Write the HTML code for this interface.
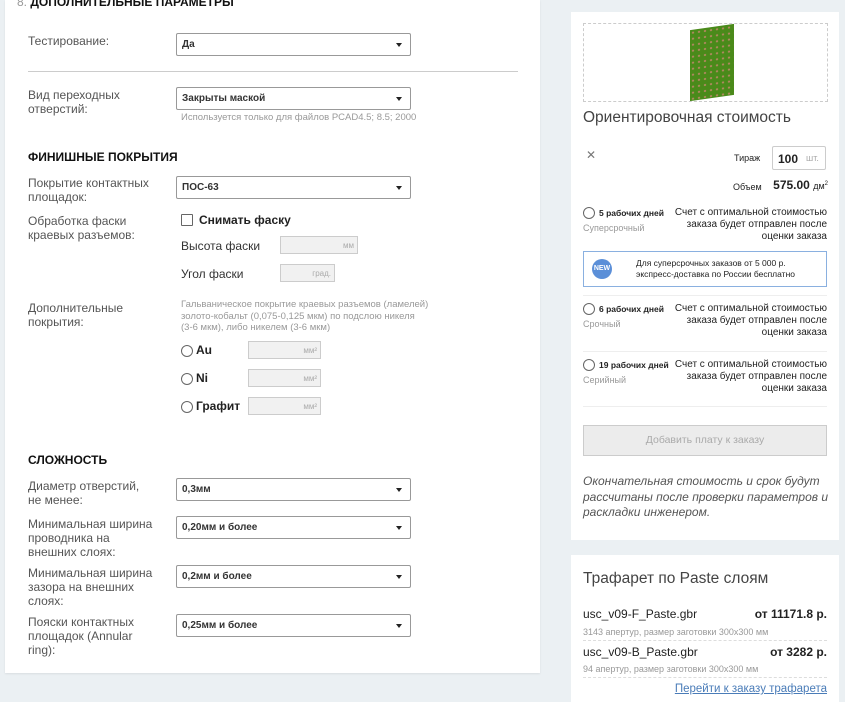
<!DOCTYPE html>
<html><head><meta charset="utf-8"><style>
html,body{margin:0;width:845px;height:702px;overflow:hidden}
body{background:#ebf0f3;font-family:"Liberation Sans",Arial,sans-serif;position:relative;color:#222}
.a{position:absolute}
.lp{left:5px;top:0;width:535px;height:673px;background:#fff;box-shadow:0 1px 2px rgba(0,0,0,.08)}
.lbl{position:absolute;left:28px;font-size:12px;color:#555;line-height:14px}
.sel{position:absolute;left:176px;height:21px;border:1px solid #999;border-radius:2px;font-size:10px;font-weight:bold;color:#333;line-height:21px;padding-left:5px;box-sizing:content-box;width:228px}
.sel:after{content:"";position:absolute;right:8px;top:9px;border-left:3.5px solid transparent;border-right:3.5px solid transparent;border-top:4px solid #222}
.h{position:absolute;left:28px;font-size:12px;font-weight:bold;color:#111}
.hint{position:absolute;left:181px;font-size:9.5px;color:#999;line-height:11.5px}
.inp{position:absolute;background:#f1f1f1;border:1px solid #ccc;font-size:8px;color:#aaa;text-align:right;padding-right:3px;box-sizing:border-box;height:18px;line-height:17px}
.rad{position:absolute;width:10px;height:10px;border:1px solid #666;border-radius:50%}
.rp{left:571px;top:12px;width:268px;height:528px;background:#fff}
.rp2{left:571px;top:555px;width:268px;height:147px;background:#fff}
.sm{font-size:9px}
.desc{position:absolute;right:18px;text-align:right;font-size:10px;line-height:12px;color:#222;white-space:nowrap}
.sep{position:absolute;left:583px;width:244px;height:1px;background:#eee}
.r{position:absolute;right:18px;text-align:right}
</style></head><body>
<div class="a lp"></div>
<div class="a" style="left:17px;top:-5px;font-size:12px;font-weight:bold;color:#111"><span style="color:#999;font-weight:normal">8.</span> ДОПОЛНИТЕЛЬНЫЕ ПАРАМЕТРЫ</div>
<div class="lbl" style="top:34px">Тестирование:</div>
<div class="sel" style="top:33px">Да</div>
<div class="a" style="left:28px;top:71px;width:490px;height:1px;background:#ccc"></div>
<div class="lbl" style="top:88px">Вид переходных<br>отверстий:</div>
<div class="sel" style="top:87px">Закрыты маской</div>
<div class="hint" style="top:112px">Используется только для файлов PCAD4.5; 8.5; 2000</div>
<div class="h" style="top:150px">ФИНИШНЫЕ ПОКРЫТИЯ</div>
<div class="lbl" style="top:176px">Покрытие контактных<br>площадок:</div>
<div class="sel" style="top:176px">ПОС-63</div>
<div class="lbl" style="top:214px">Обработка фаски<br>краевых разъемов:</div>
<div class="a" style="left:181px;top:214px;width:10px;height:10px;border:1px solid #666;border-radius:1px"></div>
<div class="a" style="left:199px;top:213px;font-size:12px;font-weight:bold">Снимать фаску</div>
<div class="a" style="left:181px;top:239px;font-size:12px;color:#333">Высота фаски</div>
<div class="inp" style="left:280px;top:236px;width:78px">мм</div>
<div class="a" style="left:181px;top:267px;font-size:12px;color:#333">Угол фаски</div>
<div class="inp" style="left:280px;top:264px;width:55px">град.</div>
<div class="lbl" style="top:301px">Дополнительные<br>покрытия:</div>
<div class="hint" style="top:299px">Гальваническое покрытие краевых разъемов (ламелей)<br>золото-кобальт (0,075-0,125 мкм) по подслою никеля<br>(3-6 мкм), либо никелем (3-6 мкм)</div>
<div class="rad" style="left:181px;top:345px"></div><div class="a" style="left:196px;top:343px;font-size:12px;font-weight:bold">Au</div><div class="inp" style="left:248px;top:341px;width:73px">мм²</div>
<div class="rad" style="left:181px;top:373px"></div><div class="a" style="left:196px;top:371px;font-size:12px;font-weight:bold">Ni</div><div class="inp" style="left:248px;top:369px;width:73px">мм²</div>
<div class="rad" style="left:181px;top:401px"></div><div class="a" style="left:196px;top:399px;font-size:12px;font-weight:bold">Графит</div><div class="inp" style="left:248px;top:397px;width:73px">мм²</div>
<div class="h" style="top:453px">СЛОЖНОСТЬ</div>
<div class="lbl" style="top:479px">Диаметр отверстий,<br>не менее:</div>
<div class="sel" style="top:478px">0,3мм</div>
<div class="lbl" style="top:517px">Минимальная ширина<br>проводника на<br>внешних слоях:</div>
<div class="sel" style="top:516px">0,20мм и более</div>
<div class="lbl" style="top:566px">Минимальная ширина<br>зазора на внешних<br>слоях:</div>
<div class="sel" style="top:565px">0,2мм и более</div>
<div class="lbl" style="top:615px">Пояски контактных<br>площадок (Annular<br>ring):</div>
<div class="sel" style="top:614px">0,25мм и более</div>

<div class="a rp"></div>
<div class="a" style="left:583px;top:23px;width:243px;height:77px;border:1px dashed #ccc"></div>
<div class="a" style="left:690px;top:27px;width:44px;height:71px;background:#4a8a1a;transform:skewY(-8deg);background-image:radial-gradient(#b86 0.8px,transparent 1.3px);background-size:6px 6px"></div>
<div class="a" style="left:583px;top:109px;font-size:15.5px;color:#444">Ориентировочная стоимость</div>
<div class="a" style="left:586px;top:148px;font-size:12px;color:#777">✕</div>
<div class="a sm" style="left:734px;top:153px">Тираж</div>
<div class="a" style="left:772px;top:146px;width:54px;height:24px;border:1px solid #ccc;border-radius:2px;box-sizing:border-box"><b style="position:absolute;left:5px;top:5px;font-size:12px">100</b><span style="position:absolute;left:33px;top:6px;font-size:9px;color:#aaa">шт.</span></div>
<div class="a sm" style="left:733px;top:182px">Объем</div>
<div class="r" style="top:178px;font-size:12px;right:17px"><b>575.00</b> <span style="font-size:9px">дм<sup style="font-size:6px">2</sup></span></div>
<div class="rad" style="left:583px;top:207px"></div><div class="a" style="left:599px;top:208px;font-size:8.5px;font-weight:bold">5 рабочих дней</div><div class="a sm" style="left:583px;top:223px;color:#999">Суперсрочный</div>
<div class="desc" style="top:207px">Счет с оптимальной стоимостью<br>заказа будет отправлен после<br>оценки заказа</div>
<div class="a" style="left:583px;top:251px;width:242px;height:34px;border:1px solid #8ab0e0"></div>
<div class="a" style="left:592px;top:259px;width:20px;height:20px;border-radius:50%;background:#5b8fd8;color:#fff;font-size:7px;font-weight:bold;text-align:center;line-height:20px">NEW</div>
<div class="a" style="left:636px;top:258px;font-size:8.5px;line-height:11px">Для суперсрочных заказов от 5 000 р.<br>экспресс-доставка по России бесплатно</div>
<div class="sep" style="top:295px"></div>
<div class="rad" style="left:583px;top:303px"></div><div class="a" style="left:599px;top:304px;font-size:8.5px;font-weight:bold">6 рабочих дней</div><div class="a sm" style="left:583px;top:319px;color:#999">Срочный</div>
<div class="desc" style="top:303px">Счет с оптимальной стоимостью<br>заказа будет отправлен после<br>оценки заказа</div>
<div class="sep" style="top:351px"></div>
<div class="rad" style="left:583px;top:359px"></div><div class="a" style="left:599px;top:360px;font-size:8.5px;font-weight:bold">19 рабочих дней</div><div class="a sm" style="left:583px;top:375px;color:#999">Серийный</div>
<div class="desc" style="top:359px">Счет с оптимальной стоимостью<br>заказа будет отправлен после<br>оценки заказа</div>
<div class="sep" style="top:406px"></div>
<div class="a" style="left:583px;top:425px;width:244px;height:31px;background:#ececec;border:1px solid #ccc;box-sizing:border-box;text-align:center;line-height:29px;font-size:10.5px;color:#aaa">Добавить плату к заказу</div>
<div class="a" style="left:583px;top:474px;font-size:12px;font-style:italic;color:#555;line-height:15.5px">Окончательная стоимость и срок будут<br>рассчитаны после проверки параметров и<br>раскладки инженером.</div>

<div class="a rp2"></div>
<div class="a" style="left:583px;top:570px;font-size:15.5px;color:#444">Трафарет по Paste слоям</div>
<div class="a" style="left:583px;top:607px;font-size:12px">usc_v09-F_Paste.gbr</div>
<div class="r" style="top:607px;font-size:12px;font-weight:bold">от 11171.8 р.</div>
<div class="a" style="left:583px;top:627px;font-size:9px;color:#999">3143 апертур, размер заготовки 300x300 мм</div>
<div class="a" style="left:583px;top:640px;width:244px;border-top:1px dashed #ddd"></div>
<div class="a" style="left:583px;top:645px;font-size:12px">usc_v09-B_Paste.gbr</div>
<div class="r" style="top:645px;font-size:12px;font-weight:bold">от 3282 р.</div>
<div class="a" style="left:583px;top:664px;font-size:9px;color:#999">94 апертур, размер заготовки 300x300 мм</div>
<div class="a" style="left:583px;top:677px;width:244px;border-top:1px dashed #ddd"></div>
<div class="r" style="top:683px;font-size:11.5px;color:#4a7cb8;text-decoration:underline">Перейти к заказу трафарета</div>
</body></html>
